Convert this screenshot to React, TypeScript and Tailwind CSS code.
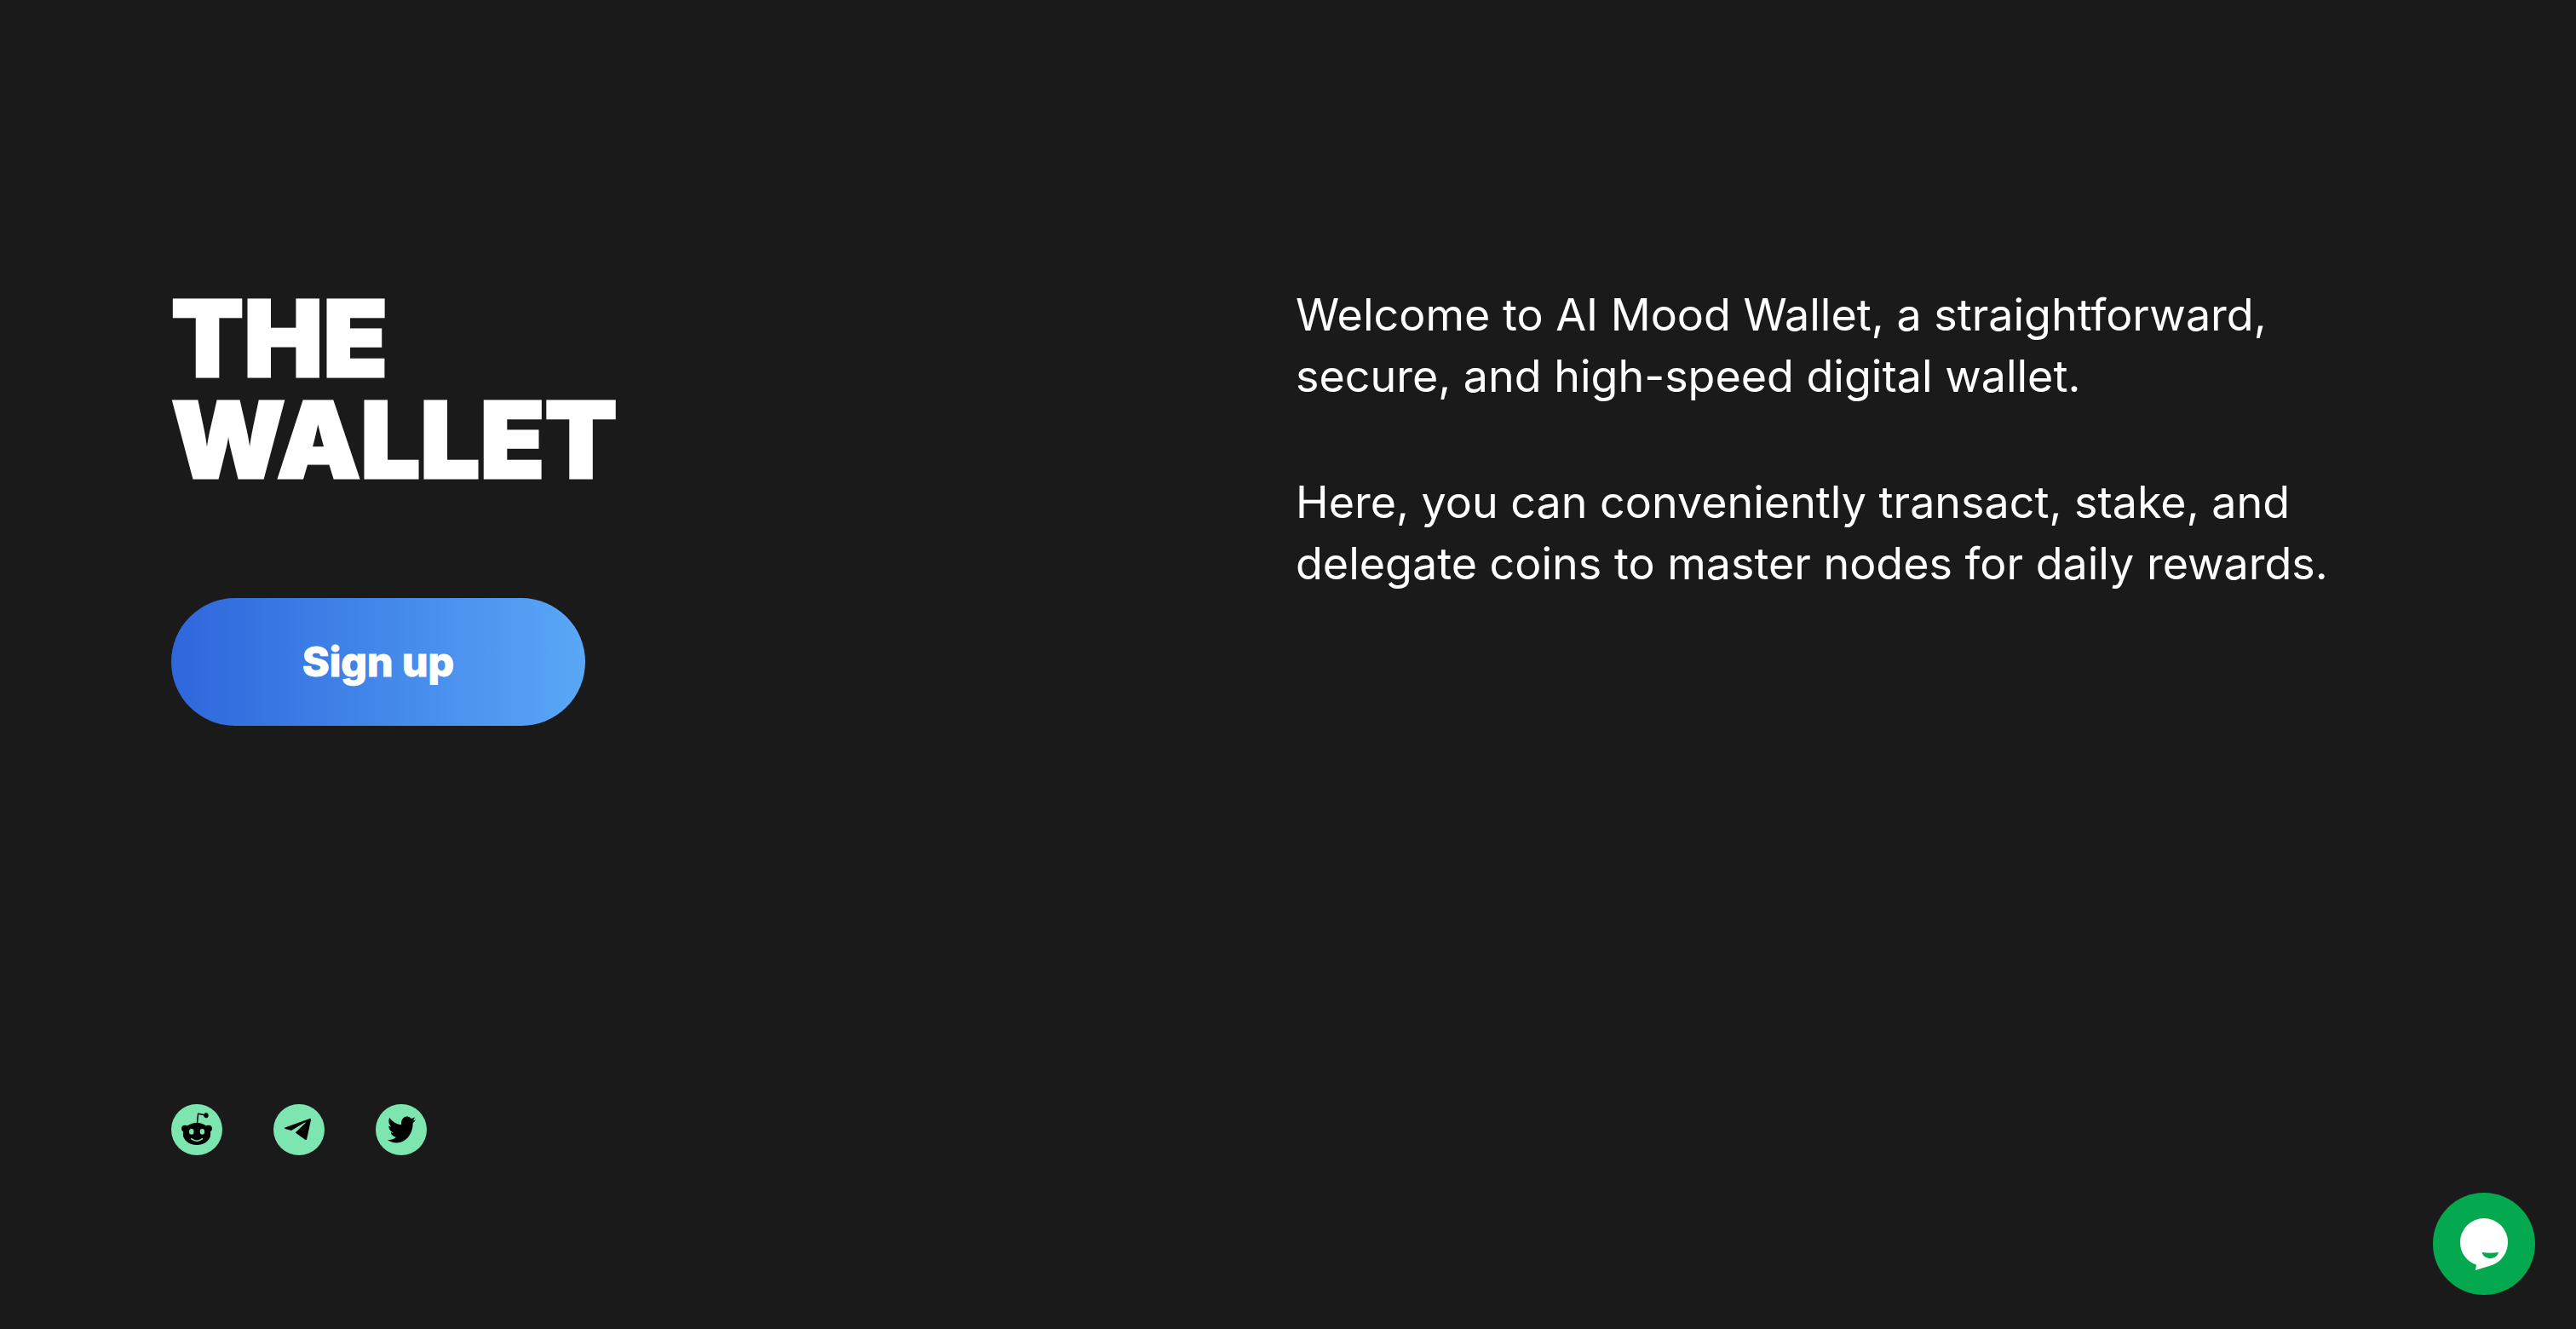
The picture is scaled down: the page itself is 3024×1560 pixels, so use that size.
import { FaTwitter } from "react-icons/fa";

function RedditIcon() {
  return (
    <svg viewBox="0 0 60 60" className="size-full" aria-hidden="true">
      <path d="M30 27 31.6 11.2 40 13" fill="none" stroke="#000" strokeWidth="1.5" strokeLinejoin="round" />
      <ellipse cx="41" cy="13.2" rx="2.7" ry="3" />
      <circle cx="16.2" cy="28.8" r="4.1" />
      <circle cx="43.8" cy="28.8" r="4.1" />
      <ellipse cx="30" cy="35" rx="16.2" ry="13" />
      <ellipse cx="23.8" cy="32.4" rx="2.7" ry="3.3" fill="#7de6b0" />
      <ellipse cx="36.4" cy="32.4" rx="2.7" ry="3.3" fill="#7de6b0" />
      <path d="M23.6 40.6Q30 45.8 36.6 40.6" fill="none" stroke="#7de6b0" strokeWidth="1.5" strokeLinecap="round" />
    </svg>
  );
}

function TelegramIcon() {
  return (
    <svg viewBox="0 0 60 60" className="size-full" aria-hidden="true">
      <path d="M13.6 27.6 42.8 17Q44.3 16.7 44 18.4L39.2 41Q38.7 42.7 37.2 41.8L25.7 33.6 37.8 22Q38.2 21 37 21.6L21 31.1 13.6 28.9Q12.4 28.2 13.6 27.6Z" />
    </svg>
  );
}

function TwitterIcon() {
  return <FaTwitter preserveAspectRatio="none" className="h-[38px] w-[33px]" aria-hidden="true" />;
}

function ChatIcon() {
  return (
    <svg viewBox="0 0 120 120" className="size-full" aria-hidden="true">
      <path
        fill="#fff"
        d="M60 30a28 28 0 0 1 28 28c0 12-7 22-17 26.500L50 91l1-6.500C40 81 32 71 32 58a28 28 0 0 1 28-28Z"
      />
      <path fill="#04a84e" d="M57.500 70Q67 71.400 77 70C76 74.500 72 77 67.500 77S58.500 74.500 57.500 70Z" />
    </svg>
  );
}

const socials = [
  { name: "Reddit", Icon: RedditIcon },
  { name: "Telegram", Icon: TelegramIcon },
  { name: "Twitter", Icon: TwitterIcon },
];

export default function App() {
  return (
    <main className="relative min-h-screen bg-[#1a1a1a] px-[201px] pt-[334px] font-['Inter',sans-serif] text-white">
      <div className="grid grid-cols-2 items-start gap-x-[18px]">
        <div className="pt-1">
          <h1 className="text-[124px] leading-[119px] font-black [-webkit-text-stroke:3px_white]">
            THE
            <br />
            WALLET
          </h1>
          <button
            type="button"
            className="mt-[126px] h-[150px] w-[486px] rounded-full bg-linear-to-r from-[#2f66dc] to-[#5aa7f6] text-[48px] font-extrabold [-webkit-text-stroke:1px_white]"
          >
            Sign up
          </button>
        </div>
        <div className="text-[52px] leading-[72px]">
          <p>Welcome to AI Mood Wallet, a straightforward, secure, and high-speed digital wallet.</p>
          <p className="mt-[76px]">
            Here, you can conveniently transact, stake, and delegate coins to master nodes for daily rewards.
          </p>
        </div>
      </div>
      <nav aria-label="Social links" className="mt-[444px] flex gap-[60px]">
        {socials.map(({ name, Icon }) => (
          <a
            key={name}
            href="#"
            aria-label={name}
            className="flex size-[60px] items-center justify-center rounded-full bg-[#7de6b0] text-black"
          >
            <Icon />
          </a>
        ))}
      </nav>
      <button
        type="button"
        aria-label="Open chat"
        className="absolute right-[48px] bottom-[40px] size-[120px] rounded-full bg-[#04a84e]"
      >
        <ChatIcon />
      </button>
    </main>
  );
}
